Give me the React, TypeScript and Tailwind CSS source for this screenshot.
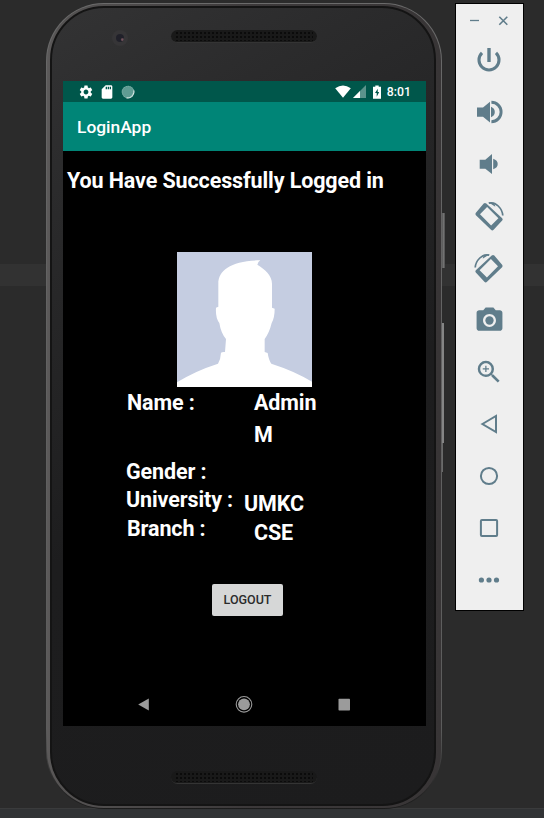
import type { ReactNode } from "react";
import { MdPhotoCamera, MdSdCard, MdSettings, MdZoomIn } from "react-icons/md";

const glyphs: ReactNode[] = [
  <svg key="power" viewBox="0 0 32 32" className="size-8">
    <path d="M9 8.8A10 10 0 1 0 23 8.8" fill="none" stroke="currentColor" strokeWidth="3.1" />
    <path d="M14.3 4h3.4v14h-3.4z" fill="currentColor" />
  </svg>,
  <svg key="vol-up" viewBox="0 0 32 32" className="size-8" fill="currentColor">
    <path d="M4 11.5h6L17 5.8v20.6l-7-5.7H4zM18 10.7Q21.8 12.2 21.8 16T18 21.2z" />
    <path d="M18.4 6.3A9.7 9.7 0 0 1 18.4 25.7" fill="none" stroke="currentColor" strokeWidth="2.9" />
  </svg>,
  <svg key="vol-down" viewBox="0 0 32 32" className="size-8" fill="currentColor">
    <path d="M6.7 11.7h5.6L19 6v20l-6.7-5.3H6.7zM20.2 10.7Q24.7 12.2 24.7 16T20.2 21.2z" />
  </svg>,
  <RotateGlyph key="left" />,
  <RotateGlyph key="right" mirrored />,
  <MdPhotoCamera key="camera" className="size-[31px]" />,
  <MdZoomIn key="zoom" className="size-[30px]" />,
  <svg key="back" viewBox="0 0 32 32" className="size-8" fill="none" stroke="currentColor" strokeWidth="2">
    <path d="M9.4 16L23 8v16z" />
  </svg>,
  <svg key="home" viewBox="0 0 32 32" className="size-8" fill="none" stroke="currentColor" strokeWidth="2">
    <circle cx="16" cy="16" r="8.1" />
  </svg>,
  <svg key="overview" viewBox="0 0 32 32" className="size-8" fill="none" stroke="currentColor" strokeWidth="2">
    <rect x="7.9" y="8" width="16.2" height="16" rx="1" />
  </svg>,
  <svg key="more" viewBox="0 0 32 32" className="size-8" fill="currentColor">
    <circle cx="8.4" cy="16" r="2.6" />
    <circle cx="16" cy="16" r="2.6" />
    <circle cx="23.5" cy="16" r="2.6" />
  </svg>,
];

function RotateGlyph({ mirrored = false }: { mirrored?: boolean }) {
  return (
    <svg viewBox="0 0 32 32" className={mirrored ? "size-8 -scale-x-100" : "size-8"} fill="currentColor">
      <path
        fillRule="evenodd"
        d="M10.7 3.5Q12 2.4 13.3 3.6L29.2 18.2Q30.2 19.4 29.2 20.5L20.6 29.8Q19.3 31 18 29.8L2.9 15.2Q1.8 14 2.9 12.8ZM14.1 7L7 14.2L18.1 25.4L25.4 18.2Z"
      />
      <path d="M15.8 3.1Q21 1.9 25.2 6T29.8 15.5" fill="none" stroke="currentColor" strokeWidth="1.7" />
      <path d="M15.3 2.3L21 2.7L22.4 6.8Z" />
    </svg>
  );
}

function Speaker() {
  return (
    <div className="h-[13px] w-[146px] rounded-full border-b border-[#343434] bg-[#191919] px-1 py-px">
      <div className="h-full w-full bg-[radial-gradient(circle_at_50%_50%,#0b0b0b_0.8px,transparent_1.2px)] bg-[size:4px_4px]" />
    </div>
  );
}

function StatusBar() {
  return (
    <div className="flex h-[21px] items-center bg-[#00574b] pr-[15px] pl-[14.5px] text-white">
      <MdSettings className="size-4" />
      <MdSdCard className="ml-[5.5px] size-4" />
      <svg viewBox="0 0 14 14" className="ml-[6px] size-3.5">
        <circle cx="7" cy="7" r="6.3" fill="#5f9c93" />
        <path d="M12.6 5.5A6 6 0 0 1 5.5 12.8" fill="none" stroke="#dbe9e7" strokeWidth="1.3" />
        <circle cx="7" cy="7" r="5.7" fill="none" stroke="#8ab7b0" strokeWidth=".7" strokeDasharray="1 1" />
      </svg>
      <svg viewBox="0 0 16 13" className="ml-auto h-[13px] w-4">
        <path d="M.2 3.2Q8-2 15.8 3.2L8 12.7z" fill="#fff" />
      </svg>
      <svg viewBox="0 0 13 13" className="ml-[1.5px] size-[13px]">
        <path d="M13 0v13H0z" fill="#5c938b" />
        <path d="M7 6v7H0z" fill="#fff" />
      </svg>
      <svg viewBox="0 0 8 14" className="ml-[7px] h-3.5 w-2">
        <path d="M0 1.7h2.3V.4h3.4v1.3H8v12H0z" fill="#fff" />
        <path d="M4.8 3.8L2 8h1.7v3.7L6.2 7H4.7z" fill="#00574b" />
      </svg>
      <span className="ml-[6px] pt-px text-[12.3px] leading-none font-medium">8:01</span>
    </div>
  );
}

function Avatar() {
  return (
    <svg viewBox="36 36 405 405" className="size-[135px] bg-[#c5cde1]">
      <path
        fill="#fff"
        d="M36 427Q90 393 159 371Q167 358 168 338Q172 335 180 336L183 297Q168 280 163 249Q151 233 153 203L160 200V130C160 91 200 61 286 61Q277 67 277 74C299 87 321 106 321 131V203L329 206Q329 233 320 249Q313 278 299 297V336L308 339Q311 360 319 371Q388 393 441 425V441H36Z"
      />
    </svg>
  );
}

function Screen() {
  return (
    <div className="flex h-[645px] w-[363px] flex-col bg-black text-white">
      <StatusBar />
      <div className="flex h-[49px] items-center bg-[#008577] pt-[2px] pl-[14px] text-[17.4px] font-medium">LoginApp</div>
      <h1 className="mt-[14px] ml-1 text-[21.5px] leading-8 font-bold tracking-[-0.11px] whitespace-nowrap">
        You Have Successfully Logged in
      </h1>
      <div className="mt-[55px] ml-[114px]">
        <Avatar />
      </div>
      <div className="flex h-[197px] pl-16 text-[21.5px] font-bold tracking-[-0.11px] whitespace-nowrap">
        <div className="w-[117px] leading-[28px]">
          <p className="mt-[2px]">Name :</p>
          <p className="mt-[41px] -ml-px">Gender :</p>
          <p className="-ml-px">University :</p>
          <p className="mt-[1px]">Branch :</p>
        </div>
        <div className="leading-[32px]">
          <p className="pl-[10px]">Admin<br />M</p>
          <p className="mt-[39px] leading-[28px]">UMKC</p>
          <p className="mt-[1px] pl-[10px] leading-[28px]">CSE</p>
        </div>
      </div>
      <button className="ml-[149px] h-8 w-[71px] rounded-[2px] bg-[#d6d7d7] text-[12.5px] font-medium text-[#2b2b2b]">LOGOUT</button>
      <svg viewBox="0 0 363 44" className="mt-auto h-11 w-full" fill="#9b9b9b">
        <path d="M75.2 22.5L85.8 16.4V28.6Z" />
        <circle cx="181" cy="22.3" r="5.9" />
        <circle cx="181" cy="22.3" r="7.8" fill="none" stroke="#9b9b9b" strokeWidth="1.1" />
        <rect x="275.5" y="16.7" width="11.5" height="11.7" rx=".7" />
      </svg>
    </div>
  );
}

function Phone() {
  return (
    <div className="h-[806px] w-[396px] rounded-[58px] bg-[linear-gradient(to_bottom,#6b6b6b_0%,#666_12%,#5c5c5c_90%,#2a2a2a_97%,#1b1b1b_100%)] p-px">
      <div className="h-full rounded-[57px] bg-[linear-gradient(to_right,#5c5a5a_0%,#555353_3%,#3c393a_50%,#383536_100%)] pt-[2px] pr-[5px] pb-[2px] pl-[3px]">
        <div className="flex h-full flex-col items-start rounded-[54px] border-2 border-[#141414] bg-[linear-gradient(150deg,#333334_0%,#2b2b2c_18%,#1d1d1e_55%,#1c1c1d_100%)]">
          <div className="flex h-[73px] items-start pt-[22px] pl-[60px]">
            <div className="flex size-4 items-center justify-center rounded-full bg-[#363537]">
              <div className="size-2 rounded-full bg-[radial-gradient(circle_at_80%_70%,#75545e_0.7px,#202029_2px)]" />
            </div>
            <div className="ml-[43px]">
              <Speaker />
            </div>
          </div>
          <div className="ml-[11px]">
            <Screen />
          </div>
          <div className="mt-[45px] ml-[119px]">
            <Speaker />
          </div>
        </div>
      </div>
    </div>
  );
}

function Toolbar() {
  return (
    <div className="h-[608px] w-[69px] border border-black bg-[#efefef] text-[#607d8b]">
      <div className="flex h-[30px] items-center pt-[3px] pl-[14px]">
        <svg viewBox="0 0 40 12" className="h-3 w-10" fill="none" stroke="currentColor">
          <path d="M0 5.5h9" strokeWidth="1.3" />
          <path d="M29.3 1.7L37.3 9.7M37.3 1.7L29.3 9.7" strokeWidth="1.6" />
        </svg>
      </div>
      {glyphs.map((glyph, i) => (
        <div key={i} className="flex h-[52px] w-[66px] items-center justify-center">
          {glyph}
        </div>
      ))}
    </div>
  );
}

export default function App() {
  return (
    <div className="flex h-[818px] w-[544px] items-start overflow-hidden bg-[linear-gradient(to_bottom,#2b2b2b_264px,#323232_264px,#323232_286px,#2b2b2b_286px,#2b2b2b_808px,#3a3b3c_808px,#3a3b3c_809px,#313335_809px)] pt-[3px] pl-[46px] font-['Roboto','Liberation_Sans',sans-serif]">
      <Phone />
      <div className="mt-[210px] w-[13px]">
        <div className="h-[55px] w-[3px] bg-[linear-gradient(to_right,#555,#777_60%,#444)]" />
        <div className="mt-[55px] h-[120px] w-[2px] bg-[#858585]" />
        <div className="h-[29px] w-px bg-[#6a6a6a]" />
      </div>
      <Toolbar />
    </div>
  );
}
